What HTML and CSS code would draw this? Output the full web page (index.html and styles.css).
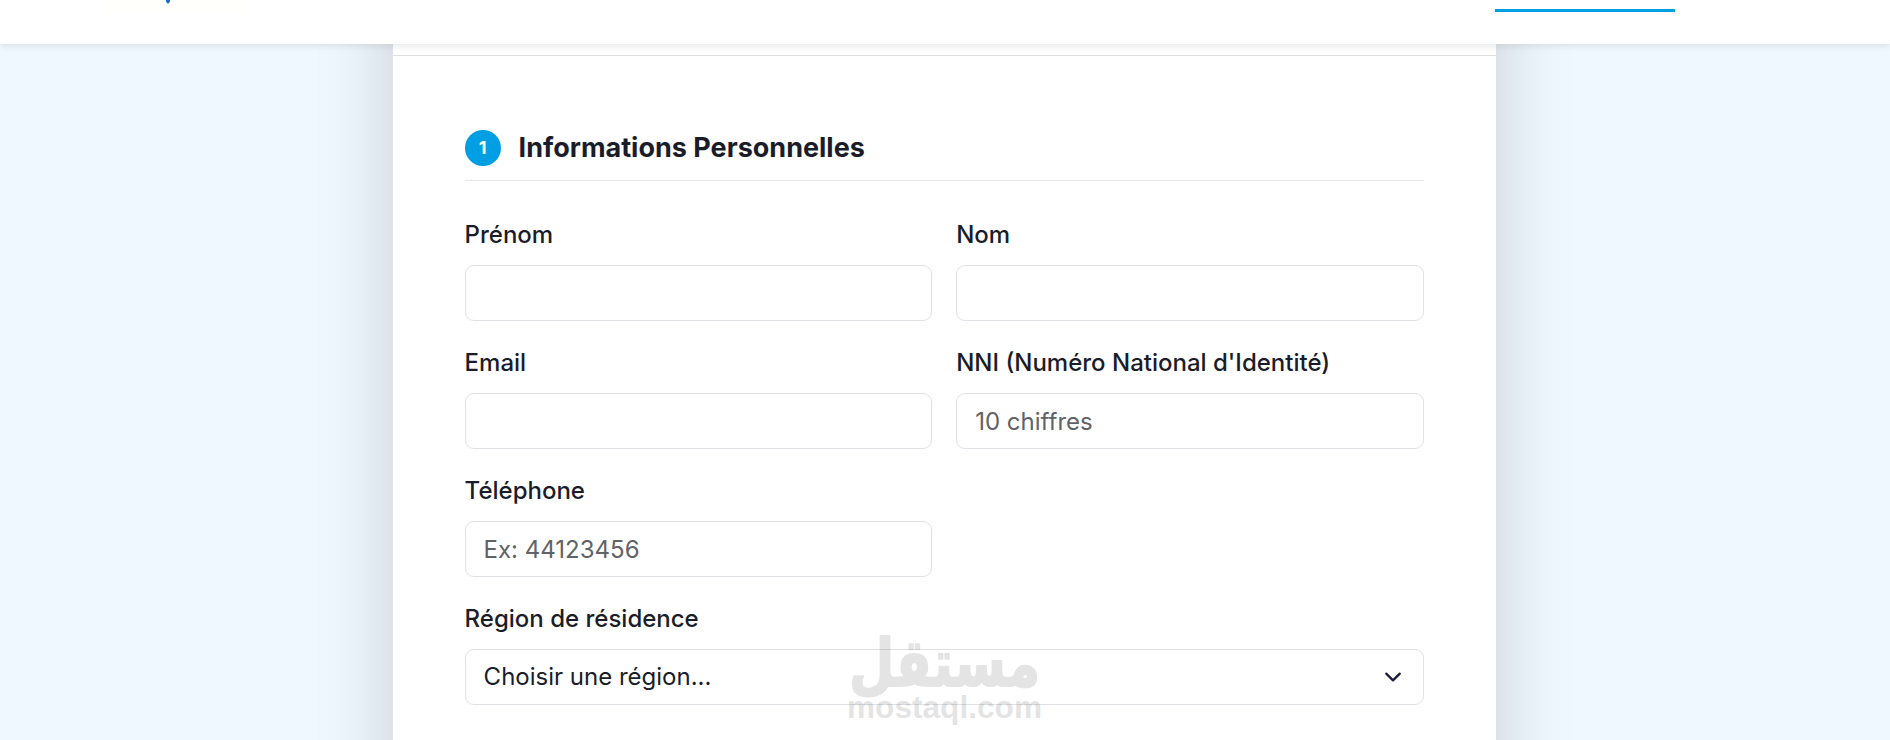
FILE: index.html
```html
<!DOCTYPE html>
<html lang="fr">
<head>
  <meta charset="UTF-8">
  <meta name="viewport" content="width=device-width, initial-scale=1.0">
  <title>Inscription</title>
  <link rel="stylesheet" href="styles.css">
</head>
<body>
  <nav class="navbar">
    <div class="brand">
      <svg class="brand-tip" width="6" height="4" viewBox="0 0 6 4"><path d="M1 0h4v1.5L3.6 3.5H2.4L1 1.5z" fill="#1f6fc4"/></svg>
    </div>
    <div class="nav-active"></div>
  </nav>

  <main class="card">
    <div class="card-header"></div>
    <form class="card-body">
      <h2 class="section-title">
        <span class="step">1</span>
        Informations Personnelles
      </h2>

      <div class="row">
        <div class="field">
          <label for="prenom">Prénom</label>
          <input type="text" id="prenom" name="prenom">
        </div>
        <div class="field">
          <label for="nom">Nom</label>
          <input type="text" id="nom" name="nom">
        </div>
        <div class="field">
          <label for="email">Email</label>
          <input type="email" id="email" name="email">
        </div>
        <div class="field">
          <label for="nni">NNI (Numéro National d'Identité)</label>
          <input type="text" id="nni" name="nni" placeholder="10 chiffres">
        </div>
        <div class="field">
          <label for="telephone">Téléphone</label>
          <input type="tel" id="telephone" name="telephone" placeholder="Ex: 44123456">
        </div>
        <div class="field field-full">
          <label for="region">Région de résidence</label>
          <select id="region" name="region">
            <option value="">Choisir une région...</option>
          </select>
        </div>
      </div>
    </form>
  </main>

  <svg class="watermark" width="210" height="110" viewBox="0 0 210 110">
    <text class="wm-ar" x="9" y="56" textLength="191" lengthAdjust="spacingAndGlyphs">مستقل</text>
    <text class="wm-en" x="7" y="88" textLength="195" lengthAdjust="spacingAndGlyphs">mostaql.com</text>
  </svg>
</body>
</html>
```

FILE: styles.css
```css
* {
    box-sizing: border-box;
}
html {
    height: 740px;
    overflow: hidden;
}
body {
    margin: 0;
    height: 740px;
    overflow: hidden;
    background: #f0f8ff;
    color: #1a1d29;
    font-family: Inter, sans-serif;
    font-size: 24px;
    line-height: 1.5;
}
.navbar {
    position: relative;
    z-index: 2;
    display: flex;
    justify-content: space-between;
    align-items: flex-start;
    height: 44px;
    padding: 0 215px 0 108px;
    background: #fff;
    box-shadow: 0 3px 6px rgba(0, 0, 0, 0.075);
}
.brand {
    display: flex;
    justify-content: center;
    align-items: flex-start;
    width: 137px;
    height: 13px;
    padding-right: 18px;
    background: #fffffc;
}
.nav-active {
    width: 180px;
    height: 3px;
    margin-top: 9px;
    background: #009fe3;
}
.card {
    width: 1103.2px;
    height: 1500px;
    margin: -200px 0 0 392.6px;
    background: #fff;
    box-shadow: 0 24px 72px rgba(0, 0, 0, 0.175);
}
.card-header {
    height: 212px;
    border-bottom: 1px solid #dfe0e2;
}
.card-body {
    padding: 72px;
}
.section-title {
    display: flex;
    align-items: center;
    gap: 18px;
    height: 53px;
    margin: 0 0 36px;
    padding-bottom: 12px;
    border-bottom: 1px solid #e6e7e9;
    font-size: 27px;
    font-weight: 700;
    line-height: 36px;
}
.step {
    display: flex;
    justify-content: center;
    align-items: center;
    width: 36px;
    height: 36px;
    border-radius: 50%;
    background: #009fe3;
    color: #fff;
    font-size: 18px;
}
.row {
    display: grid;
    grid-template-columns: 1fr 1fr;
    gap: 24px;
}
.field-full {
    grid-column: 1 / -1;
}
label {
    display: block;
    margin-bottom: 12px;
    font-weight: 500;
}
input, select {
    display: block;
    width: 100%;
    height: 56px;
    padding: 9px 18px;
    border: 1px solid #dee2e6;
    border-radius: 9px;
    background-color: #fff;
    color: #1a1d29;
    font-family: inherit;
    font-size: 24px;
    line-height: 36px;
}
input::placeholder {
    color: #5f6266;
    opacity: 1;
}
select {
    appearance: none;
    background-image: url("data:image/svg+xml,%3csvg xmlns='http://www.w3.org/2000/svg' viewBox='0 0 16 16'%3e%3cpath fill='none' stroke='%231a1a3e' stroke-linecap='round' stroke-linejoin='round' stroke-width='2' d='m2 5 6 6 6-6'/%3e%3c/svg%3e");
    background-repeat: no-repeat;
    background-position: right 18px center;
    background-size: 24px 18px;
}
.watermark {
    position: absolute;
    left: 840px;
    top: 630px;
    z-index: 3;
    overflow: visible;
    opacity: 0.1;
    pointer-events: none;
}
.wm-ar {
    font-family: "DejaVu Sans", sans-serif;
    font-size: 66px;
    font-weight: 700;
    stroke: #000;
    stroke-width: 2px;
    stroke-linejoin: round;
}
.wm-en {
    font-family: "Liberation Sans", sans-serif;
    font-size: 32px;
    font-weight: 700;
}
```
